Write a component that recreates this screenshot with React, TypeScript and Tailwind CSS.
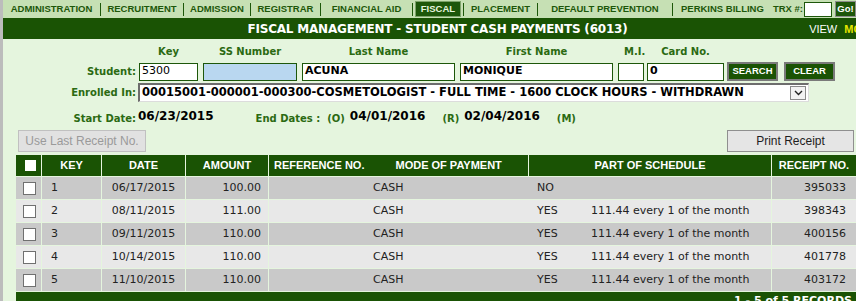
import React from 'react';

const tabs = [
  { label: 'ADMINISTRATION', w: 'w-[97px]' },
  { label: 'RECRUITMENT', w: 'w-[82px]' },
  { label: 'ADMISSION', w: 'w-[66px]' },
  { label: 'REGISTRAR', w: 'w-[69px]' },
  { label: 'FINANCIAL AID', w: 'w-[91px]' },
  { label: 'FISCAL', w: 'w-[50px]', active: true },
  { label: 'PLACEMENT', w: 'w-[73px]' },
  { label: 'DEFAULT PREVENTION', w: 'w-[134px]' },
  { label: 'PERKINS BILLING', w: 'w-[99px]' },
];

const payments = [
  { key: '1', date: '06/17/2015', amount: '100.00', mode: 'CASH', part: 'NO', sched: '', receipt: '395033' },
  { key: '2', date: '08/11/2015', amount: '111.00', mode: 'CASH', part: 'YES', sched: '111.44 every 1 of the month', receipt: '398343' },
  { key: '3', date: '09/11/2015', amount: '110.00', mode: 'CASH', part: 'YES', sched: '111.44 every 1 of the month', receipt: '400156' },
  { key: '4', date: '10/14/2015', amount: '110.00', mode: 'CASH', part: 'YES', sched: '111.44 every 1 of the month', receipt: '401778' },
  { key: '5', date: '11/10/2015', amount: '110.00', mode: 'CASH', part: 'YES', sched: '111.44 every 1 of the month', receipt: '403172' },
];

const cols = 'grid grid-cols-[25px_59px_83px_82px_259px_242px_84px] gap-x-px';

function Box({ white }: { white?: boolean }) {
  return white ? (
    <span className="block w-[11px] h-[11px] bg-white" />
  ) : (
    <span className="block w-[13px] h-[13px] bg-white border border-[#707070]" />
  );
}

function NavBar() {
  return (
    <div className="flex items-center h-[18px] bg-[#c6e0b4] text-[#1d570a] font-['Liberation_Sans',sans-serif] font-bold text-[9.5px]">
      {tabs.map((t, i) => (
        <React.Fragment key={t.label}>
          {i > 0 && <span className="w-px h-[13px] bg-[#1d570a]" />}
          <div className={`${t.w} flex justify-center items-center h-full`}>
            {t.active ? (
              <span className="h-[16px] px-[5px] flex items-center bg-[#1d570a] text-[#e5f5de] border border-[#7da36a]">{t.label}</span>
            ) : (
              <span>{t.label}</span>
            )}
          </div>
        </React.Fragment>
      ))}
      <span className="ml-[1px]">TRX #:</span>
      <span className="ml-[1px] w-[28px] h-[15px] bg-white border border-[#1d570a]" />
      <span className="ml-[3px] h-[16px] w-[21px] flex items-center justify-center bg-[#1d570a] text-white border border-[#8c8c8c]">Go!</span>
    </div>
  );
}

function Field({ w, value, bg = 'bg-white', bold = true }: { w: string; value?: string; bg?: string; bold?: boolean }) {
  return (
    <div className={`${w} h-[18px] ${bg} border border-[#1d570a] px-[2px] flex items-center text-[11px] text-black ${bold ? 'font-bold' : ''}`}>
      {value}
    </div>
  );
}

export default function App() {
  return (
    <div className="relative w-[856px] h-[301px] overflow-hidden bg-[#e5f5de] border-l-[3px] border-[#bcbcbc] font-['DejaVu_Sans',sans-serif]">
      <NavBar />
      <div className="relative h-[21px] bg-[#1a5304] flex items-center justify-center">
        <span className="text-white font-bold text-[12px] tracking-[-0.2px] ml-[16px]">FISCAL MANAGEMENT - STUDENT CASH PAYMENTS (6013)</span>
        <span className="absolute right-[-6px] top-[3px] font-['Liberation_Sans',sans-serif] text-[11px] whitespace-nowrap">
          <span className="text-white">VIEW</span>
          <span className="ml-[7px] text-[#e6e600] font-bold">MO</span>
        </span>
      </div>

      {/* student search */}
      <div className="flex mt-[6px] h-[13px] text-[10px] font-bold text-[#2b6a12] leading-[13px]">
        <div className="w-[136px]" />
        <div className="w-[59px] text-center">Key</div>
        <div className="w-[94px] ml-[5px] text-center">SS Number</div>
        <div className="w-[153px] ml-[5px] text-center">Last Name</div>
        <div className="w-[153px] ml-[5px] text-center">First Name</div>
        <div className="w-[26px] ml-[5px] text-center pl-[6px]">M.I.</div>
        <div className="w-[77px] ml-[3px] text-center">Card No.</div>
      </div>
      <div className="flex items-center mt-[4px]">
        <div className="w-[133px] text-right text-[10px] font-bold text-[#2b6a12]">Student:</div>
        <div className="ml-[3px] flex items-center">
          <Field w="w-[59px]" value="5300" bold={false} />
          <div className="ml-[5px]"><Field w="w-[94px]" bg="bg-[#b9d7f0]" /></div>
          <div className="ml-[5px]"><Field w="w-[153px]" value="ACUNA" /></div>
          <div className="ml-[5px]"><Field w="w-[153px]" value="MONIQUE" /></div>
          <div className="ml-[5px]"><Field w="w-[26px]" /></div>
          <div className="ml-[3px]"><Field w="w-[77px]" value="0" /></div>
          <button className="ml-[3px] w-[51px] h-[19px] bg-[#1a5304] border-2 border-[#7a7a7a] text-white text-[9.5px] font-bold font-['Liberation_Sans',sans-serif]">SEARCH</button>
          <button className="ml-[6px] w-[51px] h-[19px] bg-[#1a5304] border-2 border-[#7a7a7a] text-white text-[9.5px] font-bold font-['Liberation_Sans',sans-serif]">CLEAR</button>
        </div>
      </div>

      <div className="flex items-center mt-[2px]">
        <div className="w-[133px] text-right text-[10px] font-bold text-[#2b6a12]">Enrolled In:</div>
        <div className="ml-[2px] w-[671px] h-[19px] bg-white border-l-2 border-t-2 border-[#6d6d6d] border-r border-b border-r-[#dcdcdc] border-b-[#dcdcdc] flex items-center pl-[2px] pr-[2px]">
          <span className="flex-1 text-[11.5px] font-bold text-black whitespace-nowrap overflow-hidden">00015001-000001-000300-COSMETOLOGIST - FULL TIME - 1600 CLOCK HOURS - WITHDRAWN</span>
          <span className="w-[16px] h-[14px] border border-[#8a8a8a] bg-[#f2f2f2] flex items-center justify-center">
            <svg width="9" height="6" viewBox="0 0 9 6"><path d="M1 1l3.5 3.5L8 1" fill="none" stroke="#222" strokeWidth="1.4" /></svg>
          </span>
        </div>
      </div>

      <div className="flex items-end mt-[8px] h-[16px]">
        <div className="w-[133px] text-right text-[10px] font-bold text-[#2b6a12]">Start Date:</div>
        <div className="ml-[2px] text-[12px] font-bold text-black mb-[1px]">06/23/2015</div>
        <div className="ml-[42px] text-[10px] font-bold text-[#2b6a12]">End Dates :</div>
        <div className="ml-[7px] text-[10px] font-bold text-[#2b6a12]">(O)</div>
        <div className="ml-[5px] text-[12px] font-bold text-black mb-[1px]">04/01/2016</div>
        <div className="ml-[17px] text-[10px] font-bold text-[#2b6a12]">(R)</div>
        <div className="ml-[5px] text-[12px] font-bold text-black mb-[1px]">02/04/2016</div>
        <div className="ml-[17px] text-[10px] font-bold text-[#2b6a12]">(M)</div>
      </div>

      <div className="flex justify-between items-center mt-[4px] pl-[15px] pr-[2px] font-['Liberation_Sans',sans-serif] text-[12px]">
        <button className="w-[128px] h-[22px] bg-[#e1e1e1] border border-[#c0c0c0] text-[#9a9a9a]">Use Last Receipt No.</button>
        <button className="w-[127px] h-[22px] bg-[#e5e5e5] border border-[#8f8f8f] text-[#1e1e1e]">Print Receipt</button>
      </div>

      {/* payments table */}
      <div className="ml-[13px] mt-[3px] w-[840px] flex flex-col gap-y-px">
        <div className={`${cols} h-[21px] font-['Liberation_Sans',sans-serif] font-bold text-[11px] text-white`}>
          <div className="bg-[#1a5304] flex items-center justify-center pl-[3px]"><Box white /></div>
          <div className="bg-[#1a5304] flex items-center justify-center">KEY</div>
          <div className="bg-[#1a5304] flex items-center justify-center">DATE</div>
          <div className="bg-[#1a5304] flex items-center justify-center">AMOUNT</div>
          <div className="bg-[#1a5304] flex items-center pl-[5px]">
            <span>REFERENCE NO.</span>
            <span className="ml-[31px]">MODE OF PAYMENT</span>
          </div>
          <div className="bg-[#1a5304] flex items-center justify-center">PART OF SCHEDULE</div>
          <div className="bg-[#1a5304] flex items-center justify-center">RECEIPT NO.</div>
        </div>
        {payments.map((p, i) => {
          const bg = i % 2 === 0 ? 'bg-[#c9c9c9]' : 'bg-[#e8e8e8]';
          return (
            <div key={p.key} className={`${cols} h-[22px] text-[11px] text-[#222]`}>
              <div className={`${bg} flex items-center justify-center pl-[2px]`}><Box /></div>
              <div className={`${bg} flex items-center pl-[9px]`}>{p.key}</div>
              <div className={`${bg} flex items-center justify-center`}>{p.date}</div>
              <div className={`${bg} flex items-center justify-end pr-[7px]`}>{p.amount}</div>
              <div className={`${bg} col-span-2 grid grid-cols-[268px_54px_1fr] items-center`}>
                <span className="pl-[104px]">{p.mode}</span>
                <span>{p.part}</span>
                <span>{p.sched}</span>
              </div>
              <div className={`${bg} flex items-center justify-end pr-[10px]`}>{p.receipt}</div>
            </div>
          );
        })}
        <div className="h-[20px] bg-[#1a5304] flex justify-end pr-[4px] pt-[1px] text-white text-[11px] font-bold">
          <span>1 - 5 of 5 RECORDS</span>
        </div>
      </div>
    </div>
  );
}
